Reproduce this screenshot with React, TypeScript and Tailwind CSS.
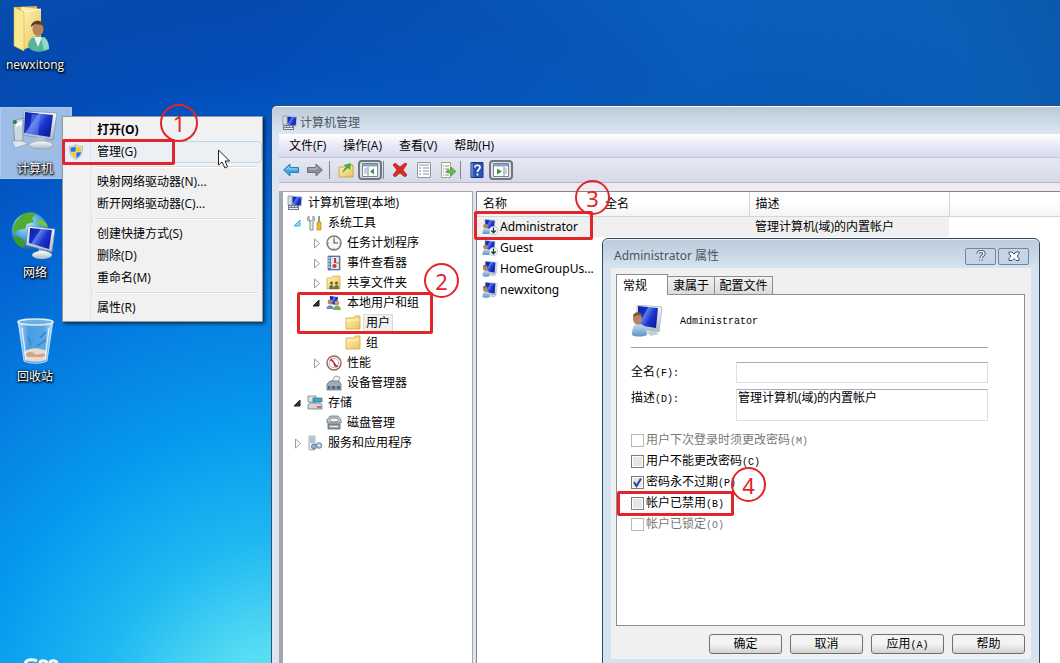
import type { ReactNode } from "react";

interface IconProps {
  className?: string;
}

interface TreeItem {
  label: string;
  depth: number;
  icon: ReactNode;
  state?: "open" | "closed" | "hot";
  selected?: boolean;
}

// Shared gradients, referenced by the icons below
function IconDefs() {
  return (
    <svg className="absolute size-0" aria-hidden="true">
      <defs>
        <linearGradient id="screen" x1="0" y1="0" x2="1" y2="0.6">
          <stop offset="0" stopColor="#0a1fa0" />
          <stop offset="0.38" stopColor="#1630c8" />
          <stop offset="0.42" stopColor="#5f80ec" />
          <stop offset="0.7" stopColor="#1c35d0" />
          <stop offset="1" stopColor="#0c1ea8" />
        </linearGradient>
        <linearGradient id="metal" x1="0" y1="0" x2="0" y2="1">
          <stop offset="0" stopColor="#fafcfd" />
          <stop offset="1" stopColor="#aeb9c4" />
        </linearGradient>
        <linearGradient id="folder" x1="0" y1="0" x2="1" y2="1">
          <stop offset="0" stopColor="#fff5b8" />
          <stop offset="1" stopColor="#e9c35a" />
        </linearGradient>
        <radialGradient id="globe" cx="0.4" cy="0.3" r="0.75">
          <stop offset="0" stopColor="#c8f0ff" />
          <stop offset="0.5" stopColor="#4aa4e4" />
          <stop offset="1" stopColor="#125aa8" />
        </radialGradient>
        <linearGradient id="glass" x1="0" y1="0" x2="1" y2="0">
          <stop offset="0" stopColor="#e3f3fd" stopOpacity="0.85" />
          <stop offset="0.3" stopColor="#8cc6ee" stopOpacity="0.5" />
          <stop offset="0.75" stopColor="#a9d9f5" stopOpacity="0.5" />
          <stop offset="1" stopColor="#e3f3fd" stopOpacity="0.9" />
        </linearGradient>
        <linearGradient id="shirt" x1="0" y1="0" x2="0" y2="1">
          <stop offset="0" stopColor="#c4dcf2" />
          <stop offset="1" stopColor="#5e93c8" />
        </linearGradient>
      </defs>
    </svg>
  );
}

function UserFolderIcon() {
  return (
    <svg viewBox="0 0 48 48" className="size-12">
      <path d="M4 3 26 2v38L12 46 4 42z" fill="#d9b552" />
      <path d="M10 3 30 5v36l-18 4z" fill="url(#folder)" />
      <path d="m3 3 10 5v39L3 42z" fill="#fbe990" stroke="#d6b048" strokeWidth="0.6" />
      <path d="M13 8 30 5" stroke="#fffbe0" />
      <path d="M17 43c0-7 4-10 9-11 7 0 11 5 12 13-6 4-16 4-21-2z" fill="#58b39c" />
      <path d="m23 33 4 10 4-10z" fill="#e6f5ee" />
      <path d="m30 34 3 12 5-1c0-6-2-10-5-12z" fill="#8fd9c0" />
      <ellipse cx="27" cy="25" rx="5.500" ry="7" fill="#b98258" />
      <path d="M20 23c0-8 13-9 13 1l-2-3-7-1z" fill="#54402c" />
    </svg>
  );
}

function ComputerIcon() {
  return (
    <svg viewBox="0 0 48 48" className="size-12">
      <path d="m2 13 10-3v22L4 36z" fill="#cdd7df" stroke="#77858f" strokeWidth="0.7" />
      <path d="m5 15 6-2v4l-6 2z" fill="#f8fafb" />
      <circle cx="4" cy="14" r="2" fill="#1f8a2d" />
      <path d="M1 33h11l5 3-13 4z" fill="#dfe6eb" stroke="#8797a4" strokeWidth="0.6" />
      <path d="M13 3 46 5l-4 27-30-5z" fill="url(#metal)" stroke="#7b8fa4" strokeWidth="0.7" />
      <path d="m14 4 28 3-3 22-26-4z" fill="url(#screen)" />
      <path d="m21 6 8 1-2 20-9-1z" fill="#7a98f2" opacity="0.45" />
      <path d="m26 29 8 1v6l-9-1z" fill="#b9c3cc" />
      <ellipse cx="30" cy="37" rx="12" ry="4" fill="url(#metal)" stroke="#8998a6" strokeWidth="0.6" />
    </svg>
  );
}

function NetworkIcon() {
  return (
    <svg viewBox="0 0 48 48" className="size-12">
      <circle cx="19" cy="19" r="18.5" fill="url(#globe)" stroke="#24609a" strokeWidth="0.6" />
      <path d="M7 7c5-6 13-8 18-5l-4 4 2 4-7 2-2 5-7 1-4 4C1 17 3 12 7 7z" fill="#4fae32" />
      <path d="M3 24c5 0 9 2 11 7l-2 5c-5-2-9-6-9-12z" fill="#3f9a2a" />
      <path d="M27 7c5 0 9 4 10 8l-6-1-5-3z" fill="#72c346" />
      <path d="m17 14 27 3-3 23-26-7z" fill="url(#metal)" stroke="#7688a0" strokeWidth="0.7" />
      <path d="m19 16 22 2-3 19-20-6z" fill="url(#screen)" />
      <path d="m28 37 7 2v4l-8-1z" fill="#b6c0c9" />
      <ellipse cx="31" cy="43" rx="10" ry="4" fill="url(#metal)" />
    </svg>
  );
}

function RecycleBinIcon() {
  return (
    <svg viewBox="0 0 48 48" className="size-12">
      <path d="M7 5h35l-6 40c-6 3-17 3-23 0z" fill="url(#glass)" stroke="#d3ebf8" strokeWidth="0.8" />
      <path d="M13 36c6-5 17-5 23 0l-1 8c-6 2-15 2-21 0z" fill="#ecd9cb" />
      <path d="M14 38c4-3 8-2 10 0s7-2 11 0l-1 3H15z" fill="#c9a892" />
      <path d="m29 22 6-6m0 8-9 6m-9-9 3 8" stroke="#3d88c4" strokeWidth="1.8" fill="none" />
      <ellipse cx="24.500" cy="6" rx="17.500" ry="3" fill="#6fb0e2" stroke="#dfe9f0" strokeWidth="1.600" />
      <path d="m11 12 4 31M38 12l-4 31" stroke="#fff" strokeWidth="1.200" opacity="0.8" />
    </svg>
  );
}

function UserScreenIcon({ className = "size-4" }: IconProps) {
  return (
    <svg viewBox="0 0 32 32" className={className}>
      <path d="M6 0 31 2l-3 25-22-3z" fill="url(#metal)" stroke="#a9b5c8" strokeWidth="0.8" />
      <path d="m7 1 20 2-2 20L7 20z" fill="url(#screen)" />
      <path d="m15 27 8-1 5 3-8 2z" fill="#c5ced6" />
      <path d="M1 30c0-8 2-11 7-11s8 4 8 11c-4 2-12 2-15 0z" fill="url(#shirt)" />
      <ellipse cx="6.500" cy="14" rx="4.500" ry="5.500" fill="#b9835b" />
      <path d="M2 12c0-6 9-6 9-1l-4-1z" fill="#7a5638" />
    </svg>
  );
}

function DisabledUserIcon() {
  return (
    <svg viewBox="0 0 16 16" className="size-4">
      <path d="m3 0.500 10 1-1 9-9-1z" fill="url(#screen)" stroke="#a9b7cc" strokeWidth="0.6" />
      <path d="M0.500 15c0-4 1-6 4-6s3 3 3 6z" fill="url(#shirt)" />
      <circle cx="3.500" cy="7" r="2.300" fill="#b9835b" />
      <circle cx="11.500" cy="11.500" r="4.200" fill="#f4f8fc" stroke="#8d9db0" strokeWidth="0.5" />
      <path d="M11.500 8.500v5m-2.200-2 2.200 2.300 2.200-2.300" fill="none" stroke="#26364a" strokeWidth="1.300" />
    </svg>
  );
}

function ManagementIcon() {
  return (
    <svg viewBox="0 0 16 16" className="size-4">
      <path d="M1 1h4v9H1z" fill="#d4dce4" stroke="#6d7a88" strokeWidth="0.6" />
      <path d="m5 1 10 1-1 9-9-1z" fill="url(#screen)" stroke="#b8c4d4" />
      <path d="M1 10h11v5H1z" fill="#717b86" />
      <path d="M2 11.500h2m1 0h2m1 0h2m-8 2h9" stroke="#e8edf2" />
    </svg>
  );
}

function ToolsIcon() {
  return (
    <svg viewBox="0 0 16 16" className="size-4">
      <path d="M2 1v4l2 1 2-1V1c2 1 2.500 5 0 6v8H3V7C0 6 0 2 2 1z" fill="#e9eef2" stroke="#66727d" strokeWidth="0.8" />
      <path d="M11 1h2v6h-2z" fill="#8e99a3" />
      <path d="M10 7h4v8h-4z" fill="#f0bf27" stroke="#aa7d0f" strokeWidth="0.6" />
    </svg>
  );
}

function ClockIcon() {
  return (
    <svg viewBox="0 0 16 16" className="size-4">
      <circle cx="8" cy="8" r="7" fill="#f6f7f4" stroke="#7d7d76" strokeWidth="1.500" />
      <path d="M8 3.500V8h4" fill="none" stroke="#4a5560" strokeWidth="1.200" />
      <path d="M8 2v1m0 10v1M2 8h1m10 0h1" stroke="#888" />
    </svg>
  );
}

function EventIcon() {
  return (
    <svg viewBox="0 0 16 16" className="size-4">
      <path d="M2 1h12v14H2z" fill="#5f86ba" stroke="#3a5580" strokeWidth="0.6" />
      <path d="M5 2h8v12H5z" fill="#dbe6f3" />
      <path d="M2 3h2M2 6h2M2 9h2M2 12h2" stroke="#fff" />
      <path d="M8 3h2v5H8z" fill="#d8342a" />
      <circle cx="8.500" cy="11" r="2" fill="#d8342a" />
      <path d="M10 7h3v2h-3z" fill="#e9b52d" />
    </svg>
  );
}

function SharedFolderIcon() {
  return (
    <svg viewBox="0 0 16 16" className="size-4">
      <path d="M1 3h5l1-2h7v13H1z" fill="url(#folder)" stroke="#c79a35" strokeWidth="0.6" />
      <circle cx="5.500" cy="8" r="1.500" fill="#7d4f24" />
      <circle cx="10.500" cy="8" r="1.500" fill="#7d4f24" />
      <path d="M3 14c0-5 4-5 5-1 1-4 5-4 5 1z" fill="#4e7d49" />
    </svg>
  );
}

function UsersIcon() {
  return (
    <svg viewBox="0 0 16 16" className="size-4">
      <path d="m4 1 8 1-1 8-7-1z" fill="url(#screen)" />
      <circle cx="4" cy="7" r="2.400" fill="#b9835b" />
      <path d="M0.500 14c0-5 7-5 7 0z" fill="#5c8ec2" />
      <circle cx="11" cy="8" r="2.400" fill="#cf9a6b" />
      <path d="M7 15c0-6 8-6 8 0z" fill="#7fae5b" />
    </svg>
  );
}

function FolderIcon() {
  return (
    <svg viewBox="0 0 16 16" className="size-4">
      <path d="M1 3h8l1-2h5v13H1z" fill="url(#folder)" stroke="#d2a640" strokeWidth="0.8" />
      <path d="M2 5h12" stroke="#fff7cc" />
    </svg>
  );
}

function PerformanceIcon() {
  return (
    <svg viewBox="0 0 16 16" className="size-4">
      <circle cx="8" cy="8" r="7" fill="#fff" stroke="#9a6767" strokeWidth="1.500" />
      <circle cx="8" cy="8" r="4.800" fill="none" stroke="#7a8088" strokeWidth="0.6" />
      <path d="m4 5 3 1 2 5 3 0M5 4l6 8" fill="none" stroke="#c42e32" strokeWidth="1.400" />
    </svg>
  );
}

function DeviceIcon() {
  return (
    <svg viewBox="0 0 16 16" className="size-4">
      <path d="m6 6 3-5 5 1-2 6z" fill="#eef2f5" stroke="#7b858e" strokeWidth="0.7" />
      <path d="M1 9 4 6h9l2 3v6H1z" fill="#a2acb5" stroke="#5a646d" strokeWidth="0.7" />
      <path d="M2 11h12v3H2z" fill="#4d6a86" />
      <path d="M5 11v3m5-3v3" stroke="#b9c6d1" />
    </svg>
  );
}

function StorageIcon() {
  return (
    <svg viewBox="0 0 16 16" className="size-4">
      <path d="M1 1h8v6H1z" fill="#dce3e9" stroke="#67737e" strokeWidth="0.7" />
      <path d="M6 3h9v4H6z" fill="#3baac8" stroke="#3f6f80" strokeWidth="0.7" />
      <path d="m1 10 2-2h10l2 2v4H1z" fill="#cfd6dc" stroke="#5e6972" strokeWidth="0.7" />
      <path d="M10 12h4" stroke="#d04545" strokeWidth="1.500" />
    </svg>
  );
}

function DiskIcon() {
  return (
    <svg viewBox="0 0 16 16" className="size-4">
      <path d="m1 5 3-4h8l3 4v3H1z" fill="#c2c8cd" stroke="#555d64" strokeWidth="0.7" />
      <ellipse cx="8" cy="5" rx="4.500" ry="2" fill="#f0f3f5" stroke="#555" strokeWidth="0.6" />
      <path d="M2 9h12v5H2z" fill="#989fa5" stroke="#4f575e" strokeWidth="0.7" />
      <path d="M4 11.500h8" stroke="#f2f2f2" />
    </svg>
  );
}

function ServicesIcon() {
  return (
    <svg viewBox="0 0 16 16" className="size-4">
      <path d="M2 1h6v14H2z" fill="#e3e9ee" stroke="#87939e" strokeWidth="0.7" />
      <path d="M3 3h4M3 5h4M3 7h4" stroke="#7e98ae" />
      <circle cx="7" cy="11.500" r="2.500" fill="#8fb3cf" stroke="#537490" strokeWidth="0.8" />
      <circle cx="12" cy="10.500" r="2.800" fill="#a9c4d9" stroke="#537490" strokeWidth="0.8" />
      <circle cx="12" cy="10.500" r="0.900" fill="#fff" />
    </svg>
  );
}

function ShieldIcon() {
  return (
    <svg viewBox="0 0 16 16" className="size-4">
      <path d="M8 0.500C6 2 3.500 2.600 1.500 2.600 1.500 9 3 13 8 15.500 13 13 14.500 9 14.500 2.600 12.500 2.600 10 2 8 0.500z" fill="#e8eef4" stroke="#8795a5" strokeWidth="0.6" />
      <path d="M7.700 2v5.700H2.800C2.600 6.300 2.600 5 2.600 3.700 4.500 3.600 6.400 3 7.700 2z" fill="#2c6fd0" />
      <path d="M8.300 2v5.700h4.900c.2-1.400.2-2.700.2-4-1.900-.1-3.800-.7-5.100-1.700z" fill="#f3c91f" />
      <path d="M7.700 8.300v6C5 12.800 3.500 11 2.900 8.300z" fill="#f3c91f" />
      <path d="M8.300 8.300v6c2.700-1.500 4.200-3.300 4.800-6z" fill="#2c6fd0" />
    </svg>
  );
}

function PaneIcon({ flip = false }: { flip?: boolean }) {
  return (
    <svg viewBox="0 0 16 16" className="size-4">
      <path d="M0.500 1.500h15v13H0.500z" fill="#fff" stroke="#73859a" />
      <path d="M1 2h14v2.500H1z" fill="#8ba2ba" />
      <path d={flip ? "M11 5v9" : "M6 5v9"} stroke="#73859a" />
      <path d={flip ? "M12 7h2m-2 2h2m-2 2h2" : "M2 7h3m-3 2h3m-3 2h3"} stroke="#8fa4ba" />
      <path d={flip ? "m4 6.500 5 3-5 3z" : "m12 6.500-4 3 4 3z"} fill="#319a3c" />
    </svg>
  );
}

function BackIcon() {
  return (
    <svg viewBox="0 0 16 16" className="size-4">
      <path d="M0.500 8 7 2v3.500h8.500v5H7V14z" fill="#3da4e3" stroke="#1c6aa8" strokeWidth="0.800" />
      <path d="M3 8 6 5v2h8.500" fill="none" stroke="#a9e0fb" />
    </svg>
  );
}

function ForwardIcon() {
  return (
    <svg viewBox="0 0 16 16" className="size-4">
      <path d="M15.500 8 9 2v3.500H0.500v5H9V14z" fill="#8b9097" stroke="#5c6268" strokeWidth="0.800" />
      <path d="M2 7h8V5" fill="none" stroke="#c3c8cc" />
    </svg>
  );
}

function UpFolderIcon() {
  return (
    <svg viewBox="0 0 16 16" className="size-4">
      <path d="M1 5h5l1-2h8v12H1z" fill="url(#folder)" stroke="#c79a35" strokeWidth="0.800" />
      <path d="M4 11c1-2 2-5 4-6L6 3l7-2-1 7-2-2c-2 1-3 3-6 5z" fill="#45ad39" />
    </svg>
  );
}

function DeleteIcon() {
  return (
    <svg viewBox="0 0 16 16" className="size-4">
      <path d="m1 3 2-2 5 4 5-4 2 1-4 6 4 5-2 2-5-4-5 4-2-2 4-5z" fill="#dc2a20" stroke="#9c1812" strokeWidth="0.6" />
    </svg>
  );
}

function PropertiesIcon() {
  return (
    <svg viewBox="0 0 16 16" className="size-4">
      <path d="M1.500 0.500h13v15h-13z" fill="#fcfdfe" stroke="#8d98a4" />
      <path d="M3 3h10M3 6h2m2 0h6M3 9h2m2 0h6M3 12h2m2 0h6" stroke="#8596a8" />
    </svg>
  );
}

function ExportIcon() {
  return (
    <svg viewBox="0 0 16 16" className="size-4">
      <path d="M1.500 0.500h9v15h-9z" fill="#fdfdf2" stroke="#a8a384" />
      <path d="M3 4h1m1 0h4M3 7h1m1 0h4M3 10h1m1 0h3M3 13h1m1 0h4" stroke="#7f8d9a" />
      <path d="M7 8h4V5l5 4.500-5 4.500v-3H7z" fill="#5fc142" stroke="#348524" strokeWidth="0.500" />
    </svg>
  );
}

function HelpIcon() {
  return (
    <svg viewBox="0 0 16 16" className="size-4">
      <path d="M2 0.500h12v15H2z" fill="#2b55b4" stroke="#17357c" />
      <path d="M3 1v14" stroke="#93acdf" />
      <path d="M6 5.500c0-3 5-3 5 0 0 2-2.500 2-2.500 4.500m0 1.500v2" fill="none" stroke="#fff" strokeWidth="1.700" />
    </svg>
  );
}

const desktopIcons = [
  { label: "newxitong", icon: <UserFolderIcon /> },
  { label: "计算机", icon: <ComputerIcon />, selected: true },
  { label: "网络", icon: <NetworkIcon /> },
  { label: "回收站", icon: <RecycleBinIcon /> },
];

const contextMenu = [
  [
    { label: "打开(O)", bold: true },
    { label: "管理(G)", icon: <ShieldIcon />, active: true },
  ],
  [{ label: "映射网络驱动器(N)..." }, { label: "断开网络驱动器(C)..." }],
  [{ label: "创建快捷方式(S)" }, { label: "删除(D)" }, { label: "重命名(M)" }],
  [{ label: "属性(R)" }],
] as { label: string; bold?: boolean; active?: boolean; icon?: ReactNode }[][];

const tree: TreeItem[] = [
  { label: "计算机管理(本地)", depth: 0, icon: <ManagementIcon /> },
  { label: "系统工具", depth: 1, icon: <ToolsIcon />, state: "hot" },
  { label: "任务计划程序", depth: 2, icon: <ClockIcon />, state: "closed" },
  { label: "事件查看器", depth: 2, icon: <EventIcon />, state: "closed" },
  { label: "共享文件夹", depth: 2, icon: <SharedFolderIcon />, state: "closed" },
  { label: "本地用户和组", depth: 2, icon: <UsersIcon />, state: "open" },
  { label: "用户", depth: 3, icon: <FolderIcon />, selected: true },
  { label: "组", depth: 3, icon: <FolderIcon /> },
  { label: "性能", depth: 2, icon: <PerformanceIcon />, state: "closed" },
  { label: "设备管理器", depth: 2, icon: <DeviceIcon /> },
  { label: "存储", depth: 1, icon: <StorageIcon />, state: "open" },
  { label: "磁盘管理", depth: 2, icon: <DiskIcon /> },
  { label: "服务和应用程序", depth: 1, icon: <ServicesIcon />, state: "closed" },
];

const treeIndent = ["pl-1", "pl-2", "pl-[27px]", "pl-[46px]"];

const users = [
  { name: "Administrator", description: "管理计算机(域)的内置帐户", disabled: true },
  { name: "Guest", description: "", disabled: true },
  { name: "HomeGroupUs...", description: "" },
  { name: "newxitong", description: "" },
];

const accountOptions = [
  { label: "用户下次登录时须更改密码", accessKey: "(M)", locked: true },
  { label: "用户不能更改密码", accessKey: "(C)" },
  { label: "密码永不过期", accessKey: "(P)", checked: true },
  { label: "帐户已禁用", accessKey: "(B)" },
  { label: "帐户已锁定", accessKey: "(O)", locked: true },
];

function DesktopIcons() {
  return (
    <div className="absolute top-[3px] left-0 flex flex-col gap-8">
      {desktopIcons.map((item) => (
        <button
          key={item.label}
          className={`flex h-[72px] w-[72px] flex-col items-center gap-1 border pr-0.5 ${
            item.selected ? "border-[#a9c9ee] bg-[#9dbce6]" : "border-transparent"
          }`}
        >
          {item.icon}
          <span className="leading-[18px] text-white [text-shadow:0_1px_2px_#000,1px_1px_2px_#000,0_0_3px_#000]">
            {item.label}
          </span>
        </button>
      ))}
    </div>
  );
}

function ContextMenu() {
  return (
    <div className="absolute top-[116px] left-[62px] w-[201px] border border-[#979797] bg-[#f1f1f1] py-0.5 shadow-[2px_2px_3px_rgba(0,0,0,0.55)]">
      {contextMenu.map((group, i) => (
        <div key={i}>
          {i > 0 && (
            <div className="ml-7 flex h-2 items-center border-l border-[#e0e0e0] px-1">
              <div className="h-0.5 flex-1 border-t border-[#dcdcdc] bg-white" />
            </div>
          )}
          {group.map((item) => (
            <button
              key={item.label}
              className={`flex h-[22px] w-full items-center pl-1 text-left ${
                item.active ? "rounded-sm border border-[#bfd5ea] bg-[#ebf0f5]" : "border border-transparent"
              }`}
            >
              <span className="mr-1.5 size-4">{item.icon}</span>
              <span
                className={`flex h-[22px] items-center border-l border-[#e2e3e3] pl-1.5 ${item.bold ? "font-bold" : ""}`}
              >
                {item.label}
              </span>
            </button>
          ))}
        </div>
      ))}
    </div>
  );
}

function ToolbarDivider() {
  return <div className="h-[18px] w-px bg-[#7f8794]" />;
}

function Toolbar() {
  const button = "flex size-6 items-center justify-center";
  const pressed = "flex h-5 w-6 items-center justify-center rounded border-2 border-[#70757e] bg-[#dce0e8]";
  return (
    <div className="flex h-[25px] items-center border-b border-[#b3b7c8] bg-linear-to-b from-[#e6e8f3] to-[#d6d9e9]">
      <button aria-label="后退" className={button}><BackIcon /></button>
      <button aria-label="前进" className={button}><ForwardIcon /></button>
      <div className="w-0.5" />
      <ToolbarDivider />
      <div className="w-1" />
      <button aria-label="上一级" className={button}><UpFolderIcon /></button>
      <button aria-label="显示控制台树" className={pressed}><PaneIcon /></button>
      <div className="w-px" />
      <ToolbarDivider />
      <div className="w-1" />
      <button aria-label="删除" className={button}><DeleteIcon /></button>
      <button aria-label="属性" className={button}><PropertiesIcon /></button>
      <button aria-label="导出列表" className={button}><ExportIcon /></button>
      <ToolbarDivider />
      <div className="w-1" />
      <button aria-label="帮助" className={button}><HelpIcon /></button>
      <button aria-label="显示操作窗格" className={pressed}><PaneIcon flip /></button>
    </div>
  );
}

function TreeArrow({ state }: { state?: TreeItem["state"] }) {
  return (
    <svg viewBox="0 0 16 16" className="size-4 shrink-0">
      {state === "closed" && <path d="m4.500 4 5 4.500-5 4.500z" fill="#fff" stroke="#9b9b9b" />}
      {state === "open" && <path d="M9 5v6H3z" fill="#333" stroke="#1f1f1f" />}
      {state === "hot" && <path d="M9 5v6H3z" fill="#8fdcf5" stroke="#35b5dc" />}
    </svg>
  );
}

function ConsoleTree() {
  return (
    <nav className="w-[194px] shrink-0 border-t border-r border-l-4 border-[#a3a7ad] bg-white">
      <ul className="pt-px">
        {tree.map((item) => (
          <li key={item.label} className={`flex h-5 items-center ${treeIndent[item.depth]}`}>
            {item.depth > 0 && <TreeArrow state={item.state} />}
            {item.icon}
            <span
              className={`ml-0.5 border px-0.5 leading-4 ${
                item.selected ? "border-[#dadada] bg-[#f0f0f0]" : "border-transparent"
              }`}
            >
              {item.label}
            </span>
          </li>
        ))}
      </ul>
    </nav>
  );
}

function UserList() {
  return (
    <div className="min-w-0 flex-1 border-t border-l border-[#828790] bg-white">
      <table className="w-full table-fixed border-collapse text-left">
        <thead>
          <tr className="h-6 bg-linear-to-b from-white from-40% to-[#f3f4f5]">
            <th className="w-[124px] border-b border-[#d5d5d5] pl-1.5 font-normal">名称</th>
            <th className="w-[148px] border-r border-b border-[#d5d5d5] pl-1 font-normal">全名</th>
            <th className="w-[200px] border-r border-b border-[#d5d5d5] pl-1.5 font-normal">描述</th>
            <th className="border-b border-[#d5d5d5]" />
          </tr>
        </thead>
        <tbody>
          {users.map((user, i) => {
            const cell = i === 0 ? "bg-[#f0f0f0]" : "";
            return (
              <tr key={user.name} className="h-[21px]">
                <td className={`pl-[5px] ${cell}`}>
                  <div className="flex items-center gap-0.5 font-['Noto_Sans',sans-serif] leading-5 whitespace-nowrap">
                    <span className="shrink-0">
                      {user.disabled ? <DisabledUserIcon /> : <UserScreenIcon />}
                    </span>
                    {user.name}
                  </div>
                </td>
                <td className={cell} />
                <td className={`pl-1.5 whitespace-nowrap ${cell}`}>{user.description}</td>
                <td />
              </tr>
            );
          })}
        </tbody>
      </table>
    </div>
  );
}

function ManagementWindow() {
  return (
    <section className="absolute top-[105px] -right-2 -bottom-2 left-[271px] flex flex-col rounded-t-md border border-[#33506e] bg-[#dbe5f0] pl-[7px]">
      <header className="-ml-[7px] flex h-7 items-center gap-0.5 rounded-t-md border-t border-white/70 bg-linear-to-b from-[#bccbd9] to-[#dbe6f1] pt-1 pl-2.5 text-[#4d565f]">
        <ManagementIcon />
        <h1>计算机管理</h1>
      </header>
      <div className="flex h-6 items-center gap-[17px] border-b border-[#c3c4d8] bg-linear-to-b from-white via-[#e9e9f6] via-50% to-[#d9dbee] pl-2.5">
        {["文件(F)", "操作(A)", "查看(V)", "帮助(H)"].map((label) => (
          <button key={label}>{label}</button>
        ))}
      </div>
      <Toolbar />
      <div className="h-2 bg-[#f1eaf0]" />
      <div className="flex flex-1 gap-[3px] bg-[#dbe5f0]">
        <ConsoleTree />
        <UserList />
      </div>
    </section>
  );
}

function KeyText({ children }: { children: ReactNode }) {
  return <span className="font-['Liberation_Mono',monospace] text-[10px]">{children}</span>;
}

function OptionRow({ option }: { option: (typeof accountOptions)[number] }) {
  return (
    <label className={`flex h-[21px] items-center gap-0.5 ${option.locked ? "text-[#777]" : "text-black"}`}>
      <span className="relative flex">
        <input
          type="checkbox"
          defaultChecked={option.checked}
          disabled={option.locked}
          className="peer size-[13px] appearance-none border border-[#7c7c7c] bg-[#e6e6e6] shadow-[inset_0_0_0_1px_#fff] disabled:border-[#b9b9b9] disabled:bg-white"
        />
        <svg viewBox="0 0 13 13" className="pointer-events-none absolute inset-0 hidden peer-checked:block">
          <path d="m3 6 2.500 4L10 2.500" fill="none" stroke="#30429c" strokeWidth="2" />
        </svg>
      </span>
      <span>
        {option.label}
        <KeyText>{option.accessKey}</KeyText>
      </span>
    </label>
  );
}

function PropertiesDialog() {
  const caption = "flex h-[17px] w-[31px] items-center justify-center rounded-xs border border-[#7286a3] bg-[#c5d5e7]";
  const tab = "border border-b-0 border-[#8c8e94] bg-linear-to-b from-[#f3f3f3] to-[#dadada] h-[18px] leading-[17px]";
  return (
    <section className="absolute top-[238px] left-[602px] w-[438px] rounded-t-md border border-[#31475c] bg-[#d5e2f0] px-2 pb-2">
      <header className="-mx-2 flex h-[29px] items-center gap-0.5 rounded-t-md border-t border-white/60 bg-linear-to-b from-[#bccbdb] to-[#d6e3f0] pt-1 pr-2.5 pl-[11px] text-[#4d565f]">
        <h2 className="flex-1 font-['Noto_Sans','Noto_Sans_CJK_SC',sans-serif]">Administrator 属性</h2>
        <button aria-label="帮助" className={caption}>
          <svg viewBox="0 0 12 12" className="size-3">
            <path d="M3 4c0-3.500 6-3.500 6 0 0 2-3 2-3 4m0 1v2" fill="none" stroke="#445365" strokeWidth="3" />
            <path d="M3 4c0-3.500 6-3.500 6 0 0 2-3 2-3 4m0 1v2" fill="none" stroke="#fff" strokeWidth="1.300" />
          </svg>
        </button>
        <button aria-label="关闭" className={caption}>
          <svg viewBox="0 0 12 12" className="size-3">
            <path d="M1 2h3l2 2 2-2h3v2L9 6l2 2.500v2H8l-2-2-2 2H1v-2L3 6 1 4z" fill="#fff" stroke="#445365" />
          </svg>
        </button>
      </header>
      <div className="bg-[#f0f0f0] pt-1.5 pr-1.5 pb-[5px] pl-[5px]">
        <div className="flex items-end">
          <button className="relative -mb-px h-[21px] w-[52px] border border-b-0 border-[#8c8e94] bg-white pl-1.5 text-left leading-[19px]">
            常规
          </button>
          <button className={`${tab} w-[47px] border-l-0`}>隶属于</button>
          <button className={`${tab} w-[58px] border-l-0`}>配置文件</button>
        </div>
        <div className="h-[332px] border border-[#8c8e94] bg-white pt-2.5 pr-9 pl-3.5">
          <div className="flex h-[43px] gap-[17px] border-b border-[#a0a0a0]">
            <UserScreenIcon className="size-8" />
            <p className="pt-[7px]">
              <KeyText>Administrator</KeyText>
            </p>
          </div>
          <div className="mt-3.5 flex items-center">
            <label htmlFor="full-name" className="w-[105px]">
              全名<KeyText>(F):</KeyText>
            </label>
            <input
              id="full-name"
              className="h-[21px] min-w-0 flex-1 border border-[#dcdfe4] border-t-[#abadb3] px-0.5 outline-none"
            />
          </div>
          <div className="mt-1.5 flex items-start">
            <label htmlFor="description" className="w-[105px] leading-[18px]">
              描述<KeyText>(D):</KeyText>
            </label>
            <textarea
              id="description"
              defaultValue="管理计算机(域)的内置帐户"
              className="h-8 min-w-0 flex-1 resize-none overflow-hidden border border-[#dcdfe4] border-t-[#abadb3] px-px leading-4 outline-none"
            />
          </div>
          <div className="mt-[9px]">
            {accountOptions.map((option) => (
              <OptionRow key={option.label} option={option} />
            ))}
          </div>
        </div>
        <div className="mt-2 flex justify-end gap-2">
          {["确定", "取消", "应用", "帮助"].map((label) => (
            <button
              key={label}
              className="h-5 w-[73px] rounded-[3px] border border-[#707070] bg-linear-to-b from-[#f3f3f3] from-50% to-[#d2d2d2] leading-[18px]"
            >
              {label}
              {label === "应用" && <KeyText>(A)</KeyText>}
            </button>
          ))}
        </div>
      </div>
    </section>
  );
}

// Numbered steps drawn over the windows
function Steps() {
  const box = "absolute rounded-xs border-3 border-[#e3242a]";
  const circle =
    "absolute flex items-center justify-center rounded-full border-2 border-[#e3242a] font-['Noto_Sans',sans-serif] text-[22px] leading-none text-[#e3242a]";
  return (
    <div className="pointer-events-none">
      <div className={`${box} top-[139px] left-[62px] h-[26px] w-[113px]`} />
      <div className={`${circle} top-[104px] left-[160px] size-[38px]`}>1</div>
      <div className={`${box} top-[292px] left-[297px] h-[42px] w-[136px]`} />
      <div className={`${circle} top-[263px] left-[424px] size-[35px]`}>2</div>
      <div className={`${box} top-[211px] left-[474px] h-[29px] w-[119px]`} />
      <div className={`${circle} top-[180px] left-[575px] size-[35px]`}>3</div>
      <div className={`${box} top-[491px] left-[617px] h-[25px] w-[117px]`} />
      <div className={`${circle} top-[467px] left-[731px] size-[35px]`}>4</div>
    </div>
  );
}

export default function App() {
  return (
    <main className="relative h-screen overflow-hidden bg-[linear-gradient(to_right,transparent_250px,rgba(14,110,200,0.45)_700px,rgba(10,90,170,0.3)_1060px),radial-gradient(circle_at_300px_750px,#8df4f8_0,#55dcf4_110px,#1fb8f2_215px,#0699ee_335px,#0580e2_440px,#0363d2_560px,#034cb8_680px,#0549ac_760px,#0b5cb8_960px,#0b56ac_1100px)] font-['Open_Sans','Noto_Sans_CJK_SC',sans-serif] text-[12px] leading-4 text-black">
      <IconDefs />
      <DesktopIcons />
      <svg viewBox="0 0 36 5" className="absolute bottom-0 left-6 h-[5px] w-9">
        <path d="M1 5c2-4 8-4 12-2M16 5c0-3 6-3 7 0M26 5c0-3 6-3 7 0" fill="none" stroke="#fff" strokeWidth="3" />
      </svg>
      <ManagementWindow />
      <ContextMenu />
      <PropertiesDialog />
      <svg viewBox="0 0 14 20" className="absolute top-[149px] left-[217px] h-5 w-3.5">
        <path d="M1.500 1v15l3.500-3 3 6 2.500-1.200L8 12h4.500z" fill="#fff" stroke="#222" />
      </svg>
      <Steps />
    </main>
  );
}
